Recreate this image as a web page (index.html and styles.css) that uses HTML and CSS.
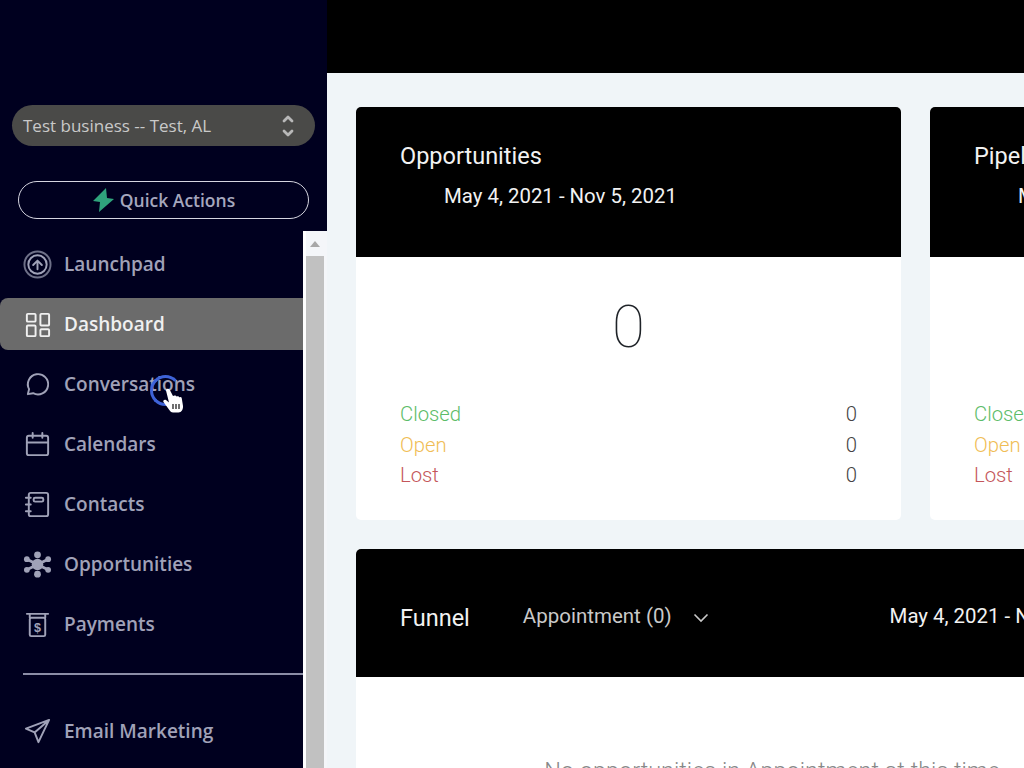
FILE: index.html
```html
<!DOCTYPE html>
<html lang="en">
<head>
    <meta charset="UTF-8">
    <meta name="viewport" content="width=device-width, initial-scale=1.0">
    <title>Dashboard</title>
    <link rel="stylesheet" href="styles.css">
</head>
<body>
    <div class="app">
        <aside class="sidebar">
            <div class="location">
                <span>Test business -- Test, AL</span>
                <svg class="location-arrows" width="14" height="26" viewBox="0 0 14 26" fill="none" stroke="currentColor" stroke-width="2.8" stroke-linecap="round" stroke-linejoin="round"><path d="M3 8l4-4 4 4M3 18l4 4 4-4"/></svg>
            </div>
            <div class="quick-actions">
                <svg width="23" height="26" viewBox="0 0 23 26"><path fill="#2fa37c" d="M14 1 1 14l7 1-1 10 15-13-7-1z"/></svg>
                <span>Quick Actions</span>
            </div>
            <div class="nav-wrap">
                <nav class="nav">
                    <a class="nav-item">
                        <svg class="nav-icon" viewBox="0 0 30 30"><circle class="ring" cx="15" cy="15" r="13.500"/><circle cx="15" cy="15" r="9.500"/><path d="M10.500 15.500 15 11l4.500 4.500M15 11v9"/></svg>
                        <span>Launchpad</span>
                    </a>
                    <a class="nav-item active">
                        <svg class="nav-icon" viewBox="0 0 30 30"><rect x="4" y="4" width="9" height="8" rx="1"/><rect x="18" y="4" width="9" height="12" rx="1"/><rect x="4" y="16" width="9" height="11" rx="1"/><rect x="18" y="20" width="9" height="7" rx="1"/></svg>
                        <span>Dashboard</span>
                    </a>
                    <a class="nav-item">
                        <svg class="nav-icon" viewBox="0 0 30 30"><path d="M5 25l1.300-5.200A10.500 10.500 0 1 1 10.500 24z"/></svg>
                        <span>Conversations</span>
                    </a>
                    <a class="nav-item">
                        <svg class="nav-icon" viewBox="0 0 30 30"><rect x="4" y="6" width="22" height="20" rx="2"/><path d="M4 13h22M10 3v5M20 3v5"/></svg>
                        <span>Calendars</span>
                    </a>
                    <a class="nav-item">
                        <svg class="nav-icon" viewBox="0 0 30 30"><rect x="6" y="3" width="20" height="24" rx="2"/><rect x="11" y="8" width="10" height="4" rx="1.500"/><path d="M3 8h5M3 15h5M3 22h5"/></svg>
                        <span>Contacts</span>
                    </a>
                    <a class="nav-item">
                        <svg class="nav-icon filled" viewBox="0 0 30 30"><circle cx="15" cy="15" r="6"/><circle cx="15" cy="5" r="3.500"/><circle cx="15" cy="25" r="3.500"/><circle cx="4" cy="9.500" r="3"/><circle cx="26" cy="9.500" r="3"/><circle cx="4" cy="20.500" r="3"/><circle cx="26" cy="20.500" r="3"/><path class="links" d="M4 9.500l22 11M26 9.500 4 20.500"/></svg>
                        <span>Opportunities</span>
                    </a>
                    <a class="nav-item">
                        <svg class="nav-icon" viewBox="0 0 30 30"><path d="M4 4h22M7 4v4M23 4v4"/><rect x="7" y="8" width="16" height="19" rx="1.500"/><text class="dollar" x="15" y="22.500">$</text></svg>
                        <span>Payments</span>
                    </a>
                    <hr class="nav-divider">
                    <a class="nav-item">
                        <svg class="nav-icon" viewBox="0 0 30 30"><path d="M27 3 3 12l9 4 4 10zM12 16 27 3"/></svg>
                        <span>Email Marketing</span>
                    </a>
                </nav>
                <div class="scrollbar">
                    <div class="scroll-up"></div>
                    <div class="scroll-thumb"></div>
                </div>
            </div>
        </aside>

        <main class="main">
            <div class="topbar"></div>
            <div class="content">
                <div class="cards">
                    <section class="card">
                        <div class="card-head">
                            <h2>Opportunities</h2>
                            <p class="date">May 4, 2021 - Nov 5, 2021</p>
                        </div>
                        <div class="card-body">
                            <div class="total">0</div>
                            <div class="stat"><span class="closed">Closed</span><span>0</span></div>
                            <div class="stat"><span class="open">Open</span><span>0</span></div>
                            <div class="stat"><span class="lost">Lost</span><span>0</span></div>
                        </div>
                    </section>
                    <section class="card">
                        <div class="card-head">
                            <h2>Pipeline Value</h2>
                            <p class="date">May 4, 2021 - Nov 5, 2021</p>
                        </div>
                        <div class="card-body">
                            <div class="total">$0</div>
                            <div class="stat"><span class="closed">Closed</span><span>$0</span></div>
                            <div class="stat"><span class="open">Open</span><span>$0</span></div>
                            <div class="stat"><span class="lost">Lost</span><span>$0</span></div>
                        </div>
                    </section>
                </div>

                <section class="funnel">
                    <div class="funnel-head">
                        <h2>Funnel</h2>
                        <span class="funnel-select">Appointment (0)</span>
                        <svg class="chevron" width="16" height="10" viewBox="0 0 16 10" fill="none" stroke="currentColor" stroke-width="1.600"><path d="M1.500 1.500 8 8l6.500-6.500"/></svg>
                        <span class="funnel-date">May 4, 2021 - Nov 5, 2021</span>
                    </div>
                    <div class="funnel-body">No opportunities in Appointment at this time</div>
                </section>
            </div>
        </main>
    </div>

    <div class="pointer">
        <svg width="22" height="25" viewBox="0 0 22 25"><path fill="#fff" d="M4 2.500a2 2 0 0 1 3.600-.9L11 8l1.500-.5a1.600 1.600 0 0 1 2 1l.8-.2a1.600 1.600 0 0 1 2 1l.5-.1a1.600 1.600 0 0 1 2 1.200L21 18c.3 3-1.500 6.500-4.500 6.500H11c-1.500 0-2.500-.7-3.300-2L1.500 14c-1-1.500 1-3 2.500-2l3 2.500z"/><path stroke="#222" stroke-width="1.300" d="M11 16v5M14 16v5M17 16v5"/></svg>
    </div>
</body>
</html>
```

FILE: styles.css
```css
* {
    box-sizing: border-box;
    margin: 0;
    padding: 0;
}

html, body {
    width: 1024px;
    height: 768px;
    overflow: hidden;
}

body {
    font-family: Roboto, sans-serif;
    position: relative;
}

.app {
    display: flex;
    height: 768px;
}

.sidebar {
    width: 327px;
    flex-shrink: 0;
    display: flex;
    flex-direction: column;
    background-color: #00001f;
    padding-top: 105px;
    font-family: "Open Sans", sans-serif;
    overflow: hidden;
}

.location {
    height: 41px;
    margin: 0 12px;
    padding: 0 20px 0 11px;
    display: flex;
    align-items: center;
    justify-content: space-between;
    border-radius: 21px;
    background-color: #4a4a48;
    color: #c9c9c9;
    font-size: 17px;
}

.location-arrows {
    color: #b8b8b8;
}

.quick-actions {
    height: 38px;
    margin: 35px 18px 12px;
    display: flex;
    align-items: center;
    justify-content: center;
    gap: 5px;
    border: 1.500px solid #d5d5e0;
    border-radius: 19px;
    color: #a5a7bd;
    font-size: 17.500px;
    font-weight: 600;
}

.nav-wrap {
    flex: 1;
    display: flex;
    min-height: 0;
}

.nav {
    width: 303px;
    padding-top: 7px;
}

.nav-item {
    height: 52px;
    margin-bottom: 8px;
    padding-left: 23px;
    display: flex;
    align-items: center;
    gap: 12px;
    border-radius: 8px 0 0 8px;
    color: #a0a2b8;
    font-size: 19px;
    font-weight: 600;
}

.nav-item.active {
    background-color: #6b6b6b;
    color: #f0f0f0;
}

.nav-icon {
    width: 29px;
    height: 29px;
    fill: none;
    stroke: currentColor;
    stroke-width: 2;
    stroke-linejoin: round;
    stroke-linecap: round;
}

.nav-icon.filled {
    fill: currentColor;
    stroke: none;
}

.nav-icon .ring {
    stroke: #6e7088;
}

.nav-icon .links {
    stroke: currentColor;
    stroke-width: 3;
}

.nav-icon .dollar {
    font-family: "Liberation Sans", sans-serif;
    font-size: 13px;
    font-weight: 700;
    text-anchor: middle;
    fill: currentColor;
    stroke: none;
}

.nav-divider {
    margin: 23px 0 30px 23px;
    border: 0;
    border-top: 2px solid #8b8da6;
}

.scrollbar {
    width: 24px;
    display: flex;
    flex-direction: column;
    border-left: 3px solid #fff;
    background-color: #f4f6f9;
}

.scroll-up {
    height: 25px;
    width: 18px;
    display: flex;
    align-items: center;
    justify-content: center;
}

.scroll-up::before {
    content: "";
    border-left: 5px solid transparent;
    border-right: 5px solid transparent;
    border-bottom: 6px solid #a8a8a8;
}

.scroll-thumb {
    flex: 1;
    width: 18px;
    background-color: #c1c1c1;
}

.main {
    flex: 1;
    min-width: 0;
    background-color: #f0f5f8;
    overflow: hidden;
}

.topbar {
    height: 73px;
    background-color: #000;
}

.content {
    padding: 34px 0 0 29px;
    width: 1300px;
}

.cards {
    display: flex;
    gap: 29px;
}

.card {
    width: 545px;
    height: 413px;
    border-radius: 5px;
    background-color: #fff;
    overflow: hidden;
}

.card-head {
    height: 150px;
    padding: 34px 44px 0;
    background-color: #000;
    color: #f2f2f2;
}

.card-head h2 {
    font-size: 23.500px;
    font-weight: 400;
    line-height: 30px;
}

.date {
    margin: 10px 0 0 44px;
    font-size: 20.400px;
    line-height: 30px;
}

.card-body {
    padding: 34px 44px 0;
}

.total {
    height: 107px;
    font-size: 60px;
    font-weight: 100;
    line-height: 72px;
    text-align: center;
    color: #1f2328;
}

.stat {
    height: 30.500px;
    display: flex;
    justify-content: space-between;
    align-items: center;
    font-size: 20.300px;
    font-weight: 300;
    color: #444;
}

.stat:nth-child(2) {
    margin-top: 1px;
}

.closed { color: #5cbc68; }
.open { color: #f0bd55; }
.lost { color: #c4565a; }

.funnel {
    width: 832px;
    margin-top: 29px;
    border-radius: 5px;
    background-color: #fff;
    overflow: hidden;
}

.funnel-head {
    height: 128px;
    padding: 10px 44px 0;
    display: flex;
    align-items: center;
    background-color: #000;
    color: #f2f2f2;
    white-space: nowrap;
}

.funnel-head h2 {
    font-size: 23.500px;
    font-weight: 400;
}

.funnel-select {
    margin: -4px 0 0 53px;
    font-size: 20.500px;
    color: #c9c9c9;
}

.chevron {
    margin: -1px 0 0 21px;
    color: #c9c9c9;
}

.funnel-date {
    margin: -4px 0 0 181px;
    font-size: 20.400px;
}

.funnel-body {
    height: 300px;
    padding-top: 80px;
    font-size: 23.500px;
    font-weight: 300;
    text-align: center;
    color: #888;
}

/* cursor highlight from the screen recording */
.pointer {
    position: absolute;
    left: 150px;
    top: 375px;
    width: 31px;
    height: 31px;
    border: 3px solid #3e63d8;
    border-right-color: transparent;
    border-radius: 50%;
}

.pointer svg {
    position: absolute;
    left: 9px;
    top: 10px;
}
```
